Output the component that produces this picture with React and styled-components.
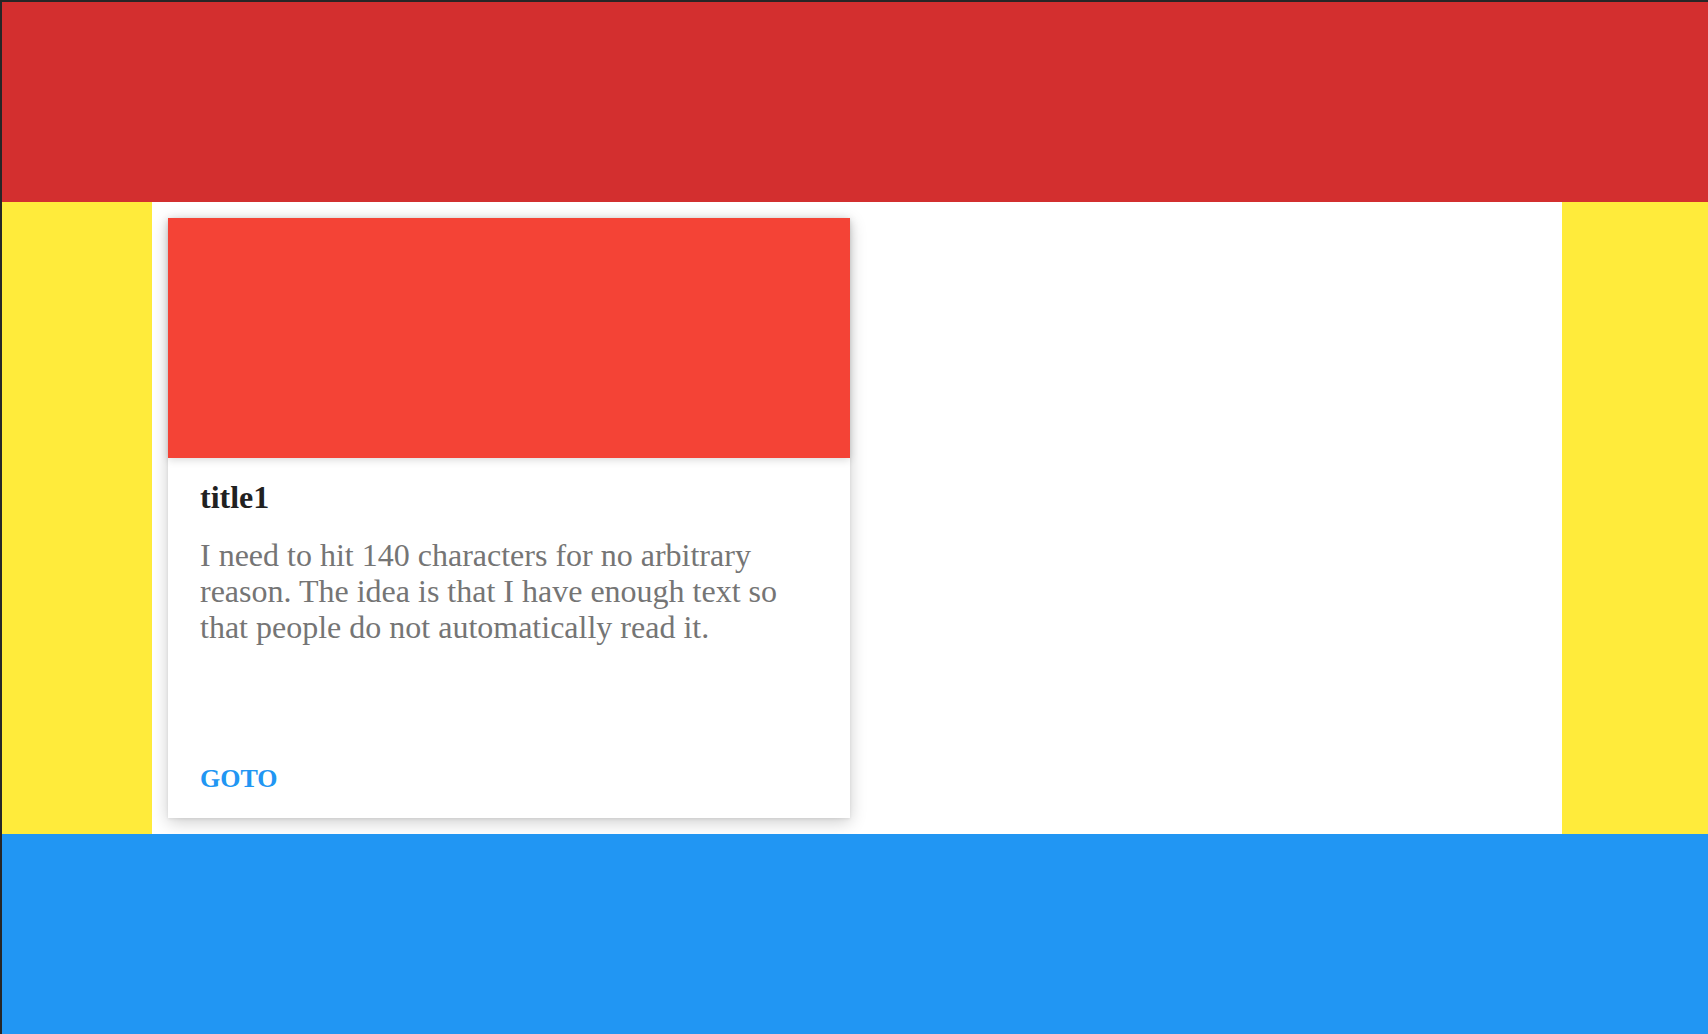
import React from 'react';
import styled, { createGlobalStyle } from 'styled-components';

const GlobalStyle = createGlobalStyle`
  html, body {
    margin: 0;
    padding: 0;
    background: #ffffff;
  }
  body {
    font-family: "Liberation Serif", "Times New Roman", serif;
  }
`;

const Frame = styled.div`
  display: grid;
  grid-template-rows: 200px 632px 200px;
  height: 1034px;
  box-sizing: border-box;
  border-top: 2px solid #262626;
  border-left: 2px solid #262626;
`;

const Header = styled.header`
  background: #d32f2f;
`;

const Footer = styled.footer`
  background: #2196f3;
`;

const Middle = styled.div`
  display: grid;
  grid-template-columns: 150px 1fr 146px;
`;

const Side = styled.aside`
  background: #ffeb3b;
`;

const Main = styled.main`
  background: #ffffff;
  padding: 16px;
  display: flex;
  align-items: flex-start;
`;

const Card = styled.div`
  width: 682px;
  height: 600px;
  background: #ffffff;
  display: flex;
  flex-direction: column;
  box-shadow: 0 4px 16px rgba(0, 0, 0, 0.2), 0 1px 3px rgba(0, 0, 0, 0.08);
`;

const Media = styled.div`
  height: 240px;
  background: ${props => props.color};
  box-shadow: 0 2px 8px rgba(0, 0, 0, 0.15);
`;

const Content = styled.div`
  flex: 1;
  padding: 21px 32px 0;
`;

const Title = styled.h2`
  margin: 0;
  font-size: 32px;
  line-height: 36px;
  font-weight: 700;
  color: #212121;
`;

const Text = styled.p`
  margin: 22px 0 0;
  font-size: 32px;
  line-height: 36px;
  color: #757575;
`;

const Actions = styled.div`
  padding: 0 32px 24px;
`;

const Link = styled.a`
  font-size: 26px;
  line-height: 30px;
  font-weight: 700;
  color: #2196f3;
  text-transform: uppercase;
  text-decoration: none;
  cursor: pointer;
`;

const App = () => (
  <>
    <GlobalStyle />
    <Frame>
      <Header />
      <Middle>
        <Side />
        <Main>
          <Card>
            <Media color="#f44336" />
            <Content>
              <Title>title1</Title>
              <Text>
                I need to hit 140 characters for no arbitrary reason. The idea is that I have
                enough text so that people do not automatically read it.
              </Text>
            </Content>
            <Actions>
              <Link>goto</Link>
            </Actions>
          </Card>
        </Main>
        <Side />
      </Middle>
      <Footer />
    </Frame>
  </>
);

export default App;
